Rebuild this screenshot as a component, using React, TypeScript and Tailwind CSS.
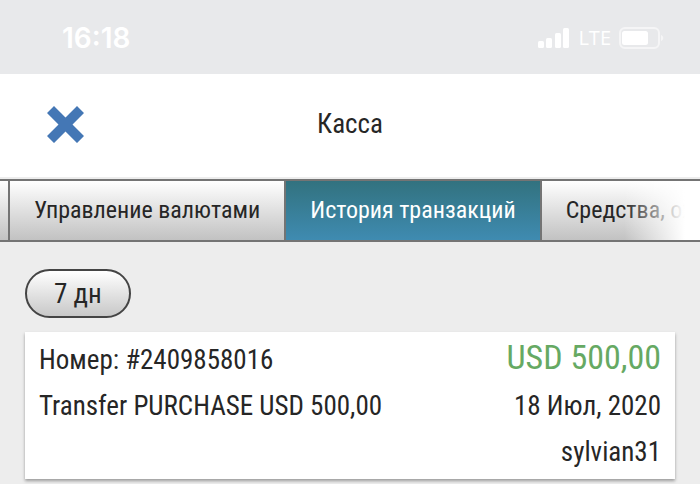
import React from "react";

const tabs = [
  { label: "Управление валютами", active: false },
  { label: "История транзакций", active: true },
  { label: "Средства, ожидающие", active: false },
];

function StatusBar() {
  return (
    <div className="flex h-[74px] items-center justify-between bg-[#e8e9eb] pr-9 pl-[62px] pt-[2px] text-white">
      <span className="font-['Inter',sans-serif] text-[28px] leading-8 font-semibold">16:18</span>
      <div className="flex items-center gap-2">
        <svg width="32" height="21" viewBox="0 0 32 21" fill="currentColor" aria-hidden="true">
          <rect x="0" y="13" width="6" height="7" rx="1.5" />
          <rect x="8" y="10" width="6" height="10" rx="1.5" />
          <rect x="17" y="5" width="6" height="15" rx="1.5" />
          <rect x="25" y="0" width="6" height="20" rx="1.5" />
        </svg>
        <span className="font-['Open_Sans',sans-serif] text-[20px] leading-8 font-medium">LTE</span>
        <svg width="45" height="22" viewBox="0 0 45 22" fill="none" aria-hidden="true">
          <rect x="1" y="1" width="39" height="20" rx="5" stroke="#f5f5f6" strokeWidth="2" />
          <rect x="3" y="4" width="26" height="14" rx="2.5" fill="#fff" />
          <path d="M42 8c3 1 3 5 0 6z" fill="#f5f5f6" />
        </svg>
      </div>
    </div>
  );
}

export default function App() {
  return (
    <div className="min-h-screen overflow-hidden bg-[#ededed] font-['Roboto_Condensed','Liberation_Sans_Narrow',Roboto,sans-serif] text-[#262626]">
      <StatusBar />
      <header className="grid h-[103px] grid-cols-[1fr_auto_1fr] items-center bg-white px-[47px] pb-[3px]">
        <button type="button" aria-label="Закрыть" className="justify-self-start">
          <svg width="37" height="37" viewBox="0 0 37 37" fill="#4477b5" aria-hidden="true">
            <path d="M7 0 18.5 11.5 30 0l7 7-11.5 11.5L37 30l-7 7-11.5-11.5L7 37l-7-7 11.5-11.5L0 7z" />
          </svg>
        </button>
        <h1 className="text-[27px] leading-8">Касса</h1>
      </header>
      <nav className="relative mt-[2px] flex h-[63px] overflow-hidden border-y-2 border-[#747474] bg-white">
        <div className="w-[10px] shrink-0 border-r-2 border-[#747474] bg-linear-to-b from-white to-[#c2c2c2]" />
        {tabs.map((tab) => (
          <button
            key={tab.label}
            type="button"
            className={
              tab.active
                ? "shrink-0 border-r-2 border-[#747474] bg-linear-to-b from-[#32727f] to-[#3f8bb1] px-6 pb-[2px] text-2xl text-white"
                : "shrink-0 border-r-2 border-[#747474] bg-linear-to-b from-white to-[#c2c2c2] px-6 pb-[2px] text-2xl"
            }
          >
            {tab.label}
          </button>
        ))}
        <div className="absolute inset-y-0 right-0 w-[76px] bg-linear-to-r from-white/0 to-white to-80%" />
      </nav>
      <main className="px-[25px] pt-[27px]">
        <button
          type="button"
          className="block h-[49px] rounded-full border-2 border-[#444] bg-linear-to-b from-white to-[#c8c8c8] px-[27px] text-[27px] leading-8"
        >
          7 дн
        </button>
        <article className="mt-[14px] flex h-[147px] justify-between bg-white px-[14px] pt-[5px] text-[27px] leading-[46px] shadow-[0_2px_3px_rgba(0,0,0,0.35)]">
          <div>
            <p>Номер: #2409858016</p>
            <p>Transfer PURCHASE USD 500,00</p>
          </div>
          <div className="text-right">
            <p className="pb-[6px] text-[34px] leading-10 text-[#66a963]">USD 500,00</p>
            <p>18 Июл, 2020</p>
            <p>sylvian31</p>
          </div>
        </article>
      </main>
    </div>
  );
}
